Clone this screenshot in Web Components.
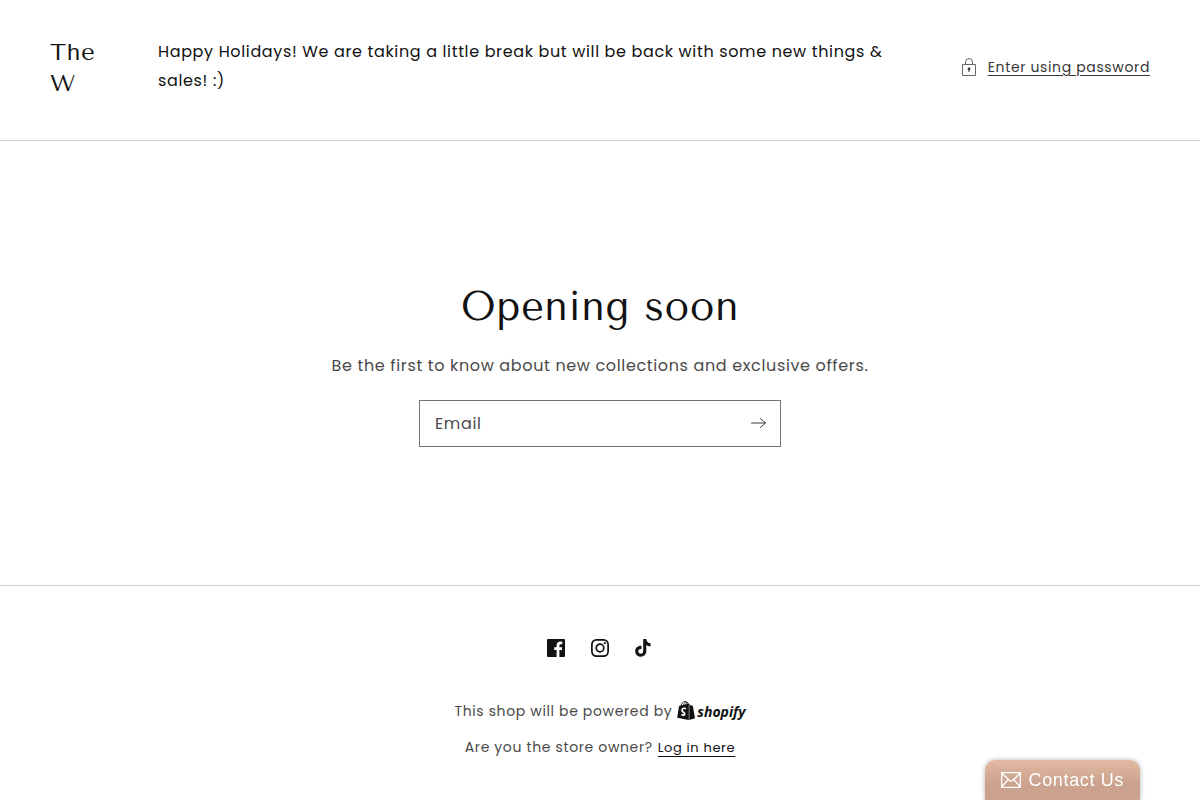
<!DOCTYPE html>
<html lang="en">
<head>
    <meta charset="utf-8">
    <meta name="viewport" content="width=device-width, initial-scale=1">
    <title>Opening soon</title>
    <style>
        html {
            --ink: #121212;
            --body: #4a4a4a;
            --line: #cfcfcf;
            --heading-font: "Tenor Sans", Lato, "Open Sans", sans-serif;
        }

        body {
            margin: 0;
            min-height: 100vh;
            background: #fff;
            color: var(--ink);
            font-family: Poppins, Inter, "Open Sans", sans-serif;
            font-size: 16px;
            line-height: 29px;
            letter-spacing: 0.04em;
        }
    </style>
</head>
<body>
    <password-header shop="The W">
        Happy Holidays! We are taking a little break but will be back with some new things &amp; sales! :)
        <password-link slot="action" href="#password">Enter using password</password-link>
    </password-header>
    <opening-soon>
        <span slot="title">Opening soon</span>
        Be the first to know about new collections and exclusive offers.
        <email-field slot="form" label="Email"></email-field>
    </opening-soon>
    <password-footer></password-footer>
    <contact-tab>Contact Us</contact-tab>

    <template id="password-header-template">
        <style>
            :host {
                display: block;
                border-bottom: 1px solid var(--line);
            }

            header {
                display: grid;
                grid-template-columns: 58px 1fr auto;
                column-gap: 50px;
                align-items: center;
                padding: 37px 50px 41px;
            }

            .shop {
                margin: 0;
                font-family: var(--heading-font);
                font-size: 24px;
                font-weight: 400;
                line-height: 31px;
            }

            .message {
                margin: 0;
                padding-bottom: 4px;
            }

            password-link,
            ::slotted(password-link) {
                padding-bottom: 2px;
            }

            @media (max-width: 749px) {
                header {
                    grid-template-columns: 1fr;
                    row-gap: 20px;
                    padding: 20px;
                }
            }
        </style>
        <header>
            <h1 class="shop"></h1>
            <p class="message"><slot></slot></p>
            <slot name="action"></slot>
        </header>
    </template>

    <template id="password-link-template">
        <style>
            :host {
                display: block;
            }

            a {
                display: flex;
                align-items: center;
                gap: 10px;
                color: #363636;
                font-size: 14px;
                line-height: 24px;
                text-decoration: none;
            }

            span {
                text-decoration: underline;
                text-underline-offset: 3px;
            }

            svg {
                width: 18px;
                height: 20px;
            }
        </style>
        <a>
            <svg viewBox="0 0 18 20" fill="none" stroke="#666" aria-hidden="true">
                <path d="M2.500 7.500h13v11h-13z"/>
                <path d="M5.500 7.500V5a3.500 3.500 0 0 1 7 0v2.500"/>
                <circle cx="9" cy="12" r="1.400" fill="#333" stroke="none"/>
                <path d="M9 12v3" stroke="#333"/>
            </svg>
            <span><slot></slot></span>
        </a>
    </template>

    <template id="opening-soon-template">
        <style>
            :host {
                display: block;
            }

            main {
                display: flex;
                flex-direction: column;
                align-items: center;
                padding: 140px 20px 138px;
                text-align: center;
            }

            h2 {
                margin: 0 0 18px;
                font-family: var(--heading-font);
                font-size: 40px;
                font-weight: 400;
                line-height: 52px;
            }

            p {
                margin: 0 0 20px;
                color: var(--body);
            }

            ::slotted(email-field) {
                width: 100%;
                max-width: 362px;
            }
        </style>
        <main>
            <h2><slot name="title"></slot></h2>
            <p><slot></slot></p>
            <slot name="form"></slot>
        </main>
    </template>

    <template id="email-field-template">
        <style>
            :host {
                display: block;
            }

            form {
                display: grid;
                grid-template-columns: 1fr 44px;
                box-sizing: border-box;
                height: 47px;
                border: 1px solid #757575;
            }

            /* the label lies in the same cell as the input */
            label,
            input {
                grid-area: 1 / 1;
                padding: 0 15px;
                text-align: left;
            }

            label {
                align-self: center;
                z-index: 1;
                color: var(--body);
                pointer-events: none;
            }

            input {
                min-width: 0;
                border: 0;
                outline: none;
                background: transparent;
                color: var(--ink);
                font: inherit;
                letter-spacing: inherit;
            }

            input:focus + label,
            input:not(:placeholder-shown) + label {
                visibility: hidden;
            }

            button {
                display: flex;
                align-items: center;
                justify-content: center;
                padding: 0;
                border: 0;
                background: none;
                cursor: pointer;
            }

            svg {
                width: 16px;
                height: 12px;
            }
        </style>
        <form>
            <input id="email" type="email" name="email" placeholder=" " autocomplete="email">
            <label for="email"></label>
            <button type="submit" aria-label="Subscribe">
                <svg viewBox="0 0 16 12" fill="none" stroke="#3c3c3c" stroke-linecap="round" stroke-linejoin="round" aria-hidden="true">
                    <path d="M1.500 5h14M10.500 .5L15.500 5l-5 4.500"/>
                </svg>
            </button>
        </form>
    </template>

    <template id="password-footer-template">
        <style>
            :host {
                display: block;
                border-top: 1px solid var(--line);
                color: var(--body);
                font-size: 14px;
            }

            footer {
                display: flex;
                flex-direction: column;
                align-items: center;
                padding: 40px 20px;
            }

            ul {
                display: flex;
                margin: 0 0 26px;
                padding: 0;
                list-style: none;
            }

            li a {
                display: flex;
                align-items: center;
                justify-content: center;
                width: 44px;
                height: 44px;
                color: var(--ink);
            }

            li svg {
                width: 20px;
                height: 20px;
            }

            p {
                display: flex;
                align-items: center;
                gap: 5px;
                height: 30px;
                margin: 0 0 6px;
            }

            .shopify {
                display: flex;
                align-items: center;
                gap: 2px;
                color: var(--ink);
                font-family: "Open Sans", sans-serif;
                font-size: 14px;
                font-style: italic;
                font-weight: 700;
                letter-spacing: 0;
                text-decoration: none;
            }

            .shopify svg {
                width: 18px;
                height: 20px;
            }

            .login {
                color: var(--ink);
                font-size: 13px;
                text-underline-offset: 4px;
            }
        </style>
        <footer>
            <ul>
                <li>
                    <a href="#facebook" aria-label="Facebook">
                        <svg viewBox="0 0 20 20" fill="currentColor" aria-hidden="true">
                            <path d="M2 1h16a1 1 0 0 1 1 1v16a1 1 0 0 1-1 1h-4.600v-7h2.400l.4-2.700h-2.800V7.600c0-.8.4-1.400 1.500-1.400h1.400V3.800c-.6-.1-1.200-.2-2-.2-2.300 0-3.700 1.400-3.700 3.700v2H8.200V12h2.400v7H2a1 1 0 0 1-1-1V2a1 1 0 0 1 1-1z"/>
                        </svg>
                    </a>
                </li>
                <li>
                    <a href="#instagram" aria-label="Instagram">
                        <svg viewBox="0 0 20 20" fill="none" stroke="currentColor" aria-hidden="true">
                            <rect x="1.900" y="1.900" width="16.200" height="16.200" rx="4.500" stroke-width="1.700"/>
                            <circle cx="10" cy="10" r="3.800" stroke-width="1.700"/>
                            <circle cx="14.800" cy="5.200" r="1.100" fill="currentColor" stroke="none"/>
                        </svg>
                    </a>
                </li>
                <li>
                    <a href="#tiktok" aria-label="TikTok">
                        <svg viewBox="0 0 20 20" fill="currentColor" aria-hidden="true">
                            <path d="M9.200 1h3.100c.2 2.400 1.800 4.100 4.200 4.300v3.100c-1.600 0-3-.5-4.200-1.300v6c0 3.400-2.500 5.700-5.500 5.700-3.200 0-5.600-2.500-5.600-5.500 0-3.300 2.800-5.800 6.300-5.400v3.200c-1.700-.5-3.200.6-3.200 2.200 0 1.400 1.100 2.400 2.400 2.400 1.500 0 2.500-1 2.500-2.700z"/>
                        </svg>
                    </a>
                </li>
            </ul>
            <p>
                <span>This shop will be powered by</span>
                <a class="shopify" href="#shopify">
                    <svg viewBox="0 0 18 20" aria-hidden="true">
                        <path d="M4 5c.5-3 2-4.500 3.700-4.500S10 2 10 4M6.500 4.500C7 2 8.500.5 9.800 1c1 .4 1.400 1.600 1.500 3" fill="none" stroke="#121212" stroke-width=".9"/>
                        <path d="M2 5l9.800-2.500V19L.2 16.800z" fill="#121212"/>
                        <path d="M12.300 3l1.700 1.500 1.800.3L18 17.200 12.300 19z" fill="#121212"/>
                        <path d="M9 7.700c-2.200-1-4-.1-4 1.500 0 2 2.700 2 2.700 3.800 0 1.500-1.800 1.600-3.300.4" fill="none" stroke="#fff" stroke-width="1.700"/>
                    </svg>
                    <span>shopify</span>
                </a>
            </p>
            <p>
                <span>Are you the store owner?</span>
                <a class="login" href="#login">Log in here</a>
            </p>
        </footer>
    </template>

    <template id="contact-tab-template">
        <style>
            :host {
                display: block;
                position: fixed;
                right: 60px;
                bottom: 0;
            }

            button {
                display: flex;
                align-items: center;
                gap: 8px;
                height: 40px;
                padding: 0 16px;
                border: 0;
                border-radius: 10px 10px 0 0;
                background: linear-gradient(#e2b9a2, #cba28d 60%, #cba28d);
                box-shadow: 0 0 5px rgba(0, 0, 0, .3);
                color: #fff;
                font-family: "Liberation Sans", Arial, sans-serif;
                font-size: 18px;
                letter-spacing: inherit;
                white-space: nowrap;
                cursor: pointer;
            }

            svg {
                width: 20px;
                height: 16px;
            }
        </style>
        <button type="button">
            <svg viewBox="0 0 20 16" fill="none" stroke="#fff" stroke-width="1.300" aria-hidden="true">
                <path d="M.7.7h18.600v14.600H.7zM.7 1l7.800 7.500q1.500 1.300 3 0L19.300 1M.7 15l6.500-7.500M19.300 15l-6.500-7.500"/>
            </svg>
            <slot></slot>
        </button>
    </template>

    <script>
        class TemplateElement extends HTMLElement {
            constructor() {
                super();
                const t = document.querySelector('#' + this.localName + '-template');
                this.attachShadow({ mode: 'open' }).appendChild(t.content.cloneNode(true));
            }
        }

        class PasswordHeader extends TemplateElement {
            connectedCallback() {
                this.shadowRoot.querySelector('.shop').textContent = this.getAttribute('shop');
            }
        }

        class PasswordLink extends TemplateElement {
            connectedCallback() {
                this.shadowRoot.querySelector('a').href = this.getAttribute('href');
            }
        }

        class OpeningSoon extends TemplateElement {}

        class EmailField extends TemplateElement {
            connectedCallback() {
                this.shadowRoot.querySelector('label').textContent = this.getAttribute('label');
                this.shadowRoot.querySelector('form').addEventListener('submit', function (e) {
                    e.preventDefault();
                });
            }
        }

        class PasswordFooter extends TemplateElement {}

        class ContactTab extends TemplateElement {}

        customElements.define('password-header', PasswordHeader);
        customElements.define('password-link', PasswordLink);
        customElements.define('opening-soon', OpeningSoon);
        customElements.define('email-field', EmailField);
        customElements.define('password-footer', PasswordFooter);
        customElements.define('contact-tab', ContactTab);
    </script>
</body>
</html>
